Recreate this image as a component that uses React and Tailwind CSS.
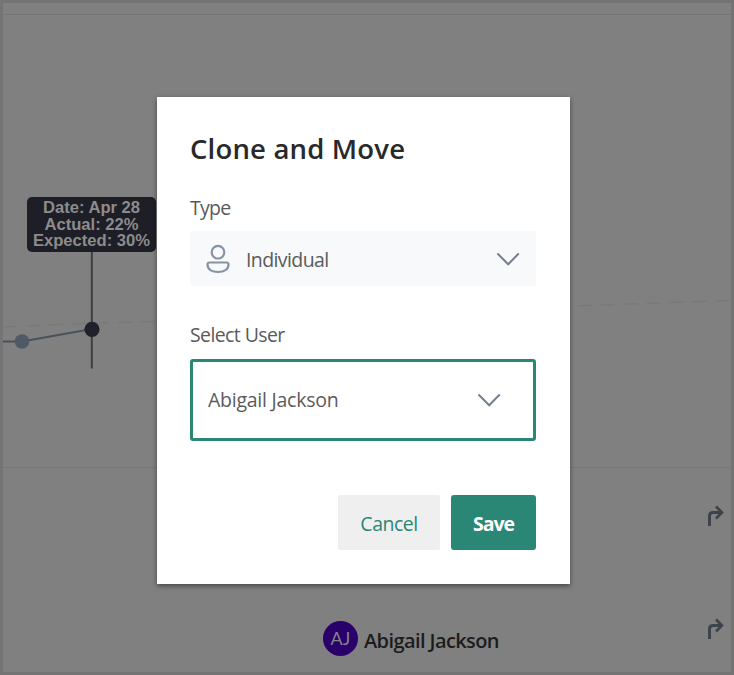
import React from "react";

function Chevron() {
  return (
    <svg width="24" height="14" viewBox="0 0 24 14" fill="none" stroke="#75808f" strokeWidth="2">
      <path d="M2 2 12.200 12.300 22.200 2" strokeLinecap="round" />
    </svg>
  );
}

function TurnArrow() {
  return (
    <svg width="17" height="22" viewBox="0 0 17 22" fill="none" stroke="#3c434d" strokeWidth="3">
      <path d="M2.500 21V11Q2.500 7.500 6 7.500H15" />
      <path d="M9 1.500 15 7.500 9 13.500" strokeWidth="2.600" />
    </svg>
  );
}

function Chart() {
  return (
    <svg className="absolute left-0 top-0" width="734" height="480" fill="none">
      <path d="M3 327 92 323 156 321.500 570 306 730 300.500" stroke="#797979" strokeWidth="1.500" strokeDasharray="14 9" />
      <path d="M3 341.500H22L92 329" stroke="#4a515b" strokeWidth="1.800" />
      <path d="M91.800 250V368.500" stroke="#3e3e41" strokeWidth="2" />
      <circle cx="22" cy="341.500" r="7.300" fill="#505a67" />
      <circle cx="92" cy="329.300" r="7.600" fill="#20202a" />
    </svg>
  );
}

function Dialog() {
  return (
    <div className="flex h-[487px] w-[413px] flex-col bg-white pl-[33px] pr-[34px] pt-[32px] text-[#5a5a5a] shadow-[0_2px_5px_rgba(0,0,0,0.45)]">
      <h1 className="h-[40px] whitespace-nowrap text-[27.5px] font-semibold leading-[40px] tracking-[0.18px] text-[#292929]">Clone and Move</h1>
      <div className="mt-[25px] h-[28px] text-[19.5px] leading-[28px] tracking-[-0.75px]">Type</div>
      <div className="mt-[9px] flex h-[55px] items-center rounded-[3px] bg-[#f7f9fb] pl-[16px] pr-[16px]">
        <svg width="24" height="30" viewBox="0 0 24 30" fill="none" stroke="#8593a5" strokeWidth="2.200">
          <circle cx="12" cy="8.200" r="6.300" />
          <path d="M3.500 18.500H20.500Q22.500 18.500 22.500 20.500C22.500 25.500 18 28 12 28S1.500 25.500 1.500 20.500Q1.500 18.500 3.500 18.500Z" />
        </svg>
        <span className="ml-[16px] flex-1 pt-[2px] text-[19.5px] tracking-[-0.6px]">Individual</span>
        <Chevron />
      </div>
      <div className="mt-[35px] h-[28px] text-[19.5px] leading-[28px] tracking-[-0.6px]">Select User</div>
      <div className="mt-[10px] flex h-[82px] items-center rounded-[3px] border-3 border-[#2b8775] pl-[15px] pr-[32px]">
        <span className="flex-1 text-[19.5px] tracking-[-0.25px]">Abigail Jackson</span>
        <Chevron />
      </div>
      <div className="mt-[54px] flex justify-end gap-[11px]">
        <button className="h-[55px] w-[102px] rounded-[2px] bg-[#efefef] pt-[3px] text-[19.5px] tracking-[-0.5px] text-[#2b8775]">Cancel</button>
        <button className="h-[55px] w-[85px] rounded-[3px] bg-[#2b8775] pt-[3px] text-[19.5px] font-bold tracking-[-1px] text-white">Save</button>
      </div>
    </div>
  );
}

export default function App() {
  return (
    <div className="relative h-[675px] w-[734px] overflow-hidden bg-[#808080] font-['Open_Sans','Noto_Sans',sans-serif]">
      <div className="flex h-full flex-col border-3 border-[#747474]">
        <div className="h-[12px] border-b border-[#747474]" />
        <div className="h-[453px] border-b border-[#787878]" />
        <div className="flex h-[96px] items-center justify-end pr-[7px]"><TurnArrow /></div>
        <div className="flex h-[108px] items-center pl-[320px] pr-[7px] pt-[40px]">
          <div className="flex size-[35px] items-center justify-center rounded-full bg-[#2a006b] font-['Lato',sans-serif] text-[18px] text-[#85808c]">AJ</div>
          <span className="ml-[6px] flex-1 pt-[5px] text-[20px] font-semibold tracking-[-0.6px] text-[#1c1c1c]">Abigail Jackson</span>
          <div className="mb-[18px]"><TurnArrow /></div>
        </div>
      </div>
      <Chart />
      <div className="absolute left-[27px] top-[197px] h-[55px] w-[129px] whitespace-nowrap rounded-[5px] bg-[#1e1e26] pt-[3px] text-center font-['Liberation_Sans',Arial,sans-serif] text-[16.6px] font-bold leading-[16.5px] text-[#8c8c8c]">
        <div>Date: Apr 28</div>
        <div>Actual: 22%</div>
        <div>Expected: 30%</div>
      </div>
      <div className="absolute left-[157px] top-[97px]">
        <Dialog />
      </div>
    </div>
  );
}
